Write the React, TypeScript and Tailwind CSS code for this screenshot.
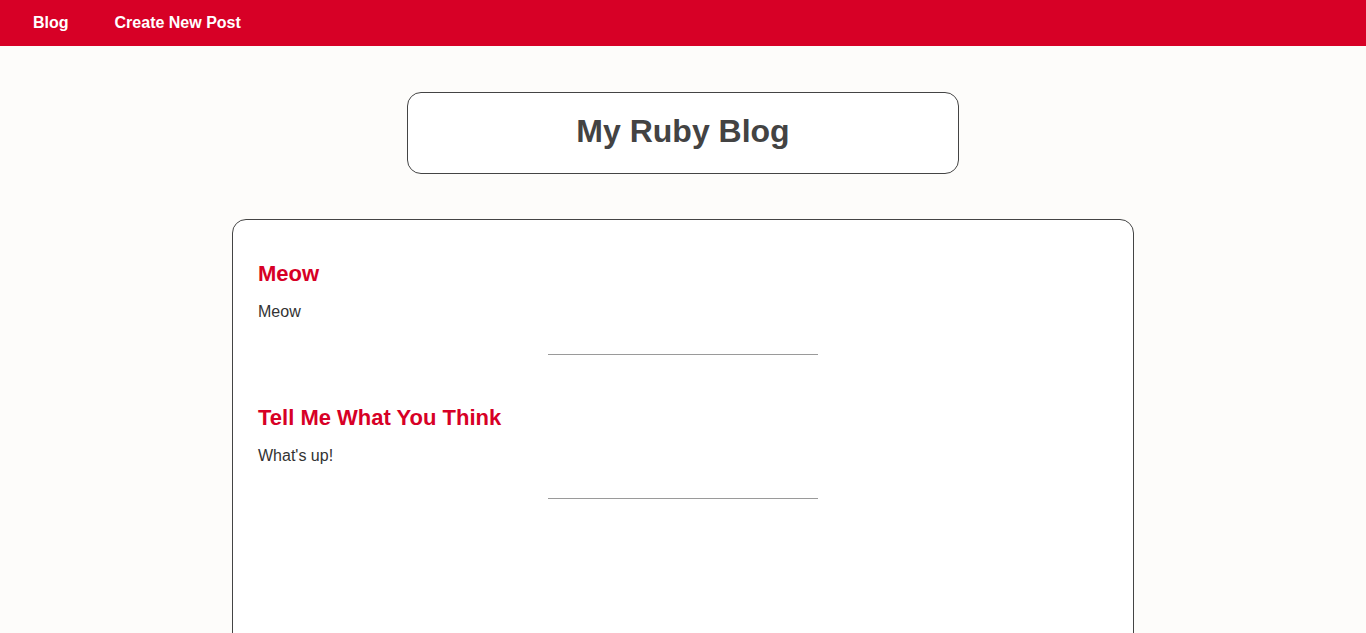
import React from "react";

const posts = [
  { title: "Meow", body: "Meow" },
  { title: "Tell Me What You Think", body: "What's up!" },
];

export default function App() {
  return (
    <div className="min-h-screen bg-[#fdfcfa] font-['Liberation_Sans',Arial,sans-serif]">
      <nav className="h-[46px] bg-[#d70026] flex items-center pl-[33px] gap-[46px] text-white font-bold text-[16px]">
        <a href="#" className="leading-[18px]">Blog</a>
        <a href="#" className="leading-[18px]">Create New Post</a>
      </nav>
      <div className="flex flex-col items-center">
        <div className="mt-[46px] w-[552px] h-[82px] bg-white border border-[#444] rounded-[14px] flex items-center justify-center pb-[3px]">
          <h1 className="text-[32px] font-bold text-[#434343] leading-[37px]">My Ruby Blog</h1>
        </div>
        <div className="mt-[45px] w-[902px] h-[480px] bg-white border border-[#444] rounded-[14px] px-[25px] pt-[41px]">
          {posts.map((p, i) => (
            <div key={i} className={i > 0 ? "mt-[50px]" : ""}>
              <h2 className="text-[22px] font-bold text-[#d70026] leading-[25px]">{p.title}</h2>
              <p className="mt-[17px] text-[16px] text-[#333] leading-[18px]">{p.body}</p>
              <div className="mt-[33px] flex justify-center">
                <div className="w-[270px] h-px bg-[#9a9a9a]" />
              </div>
            </div>
          ))}
        </div>
      </div>
    </div>
  );
}
